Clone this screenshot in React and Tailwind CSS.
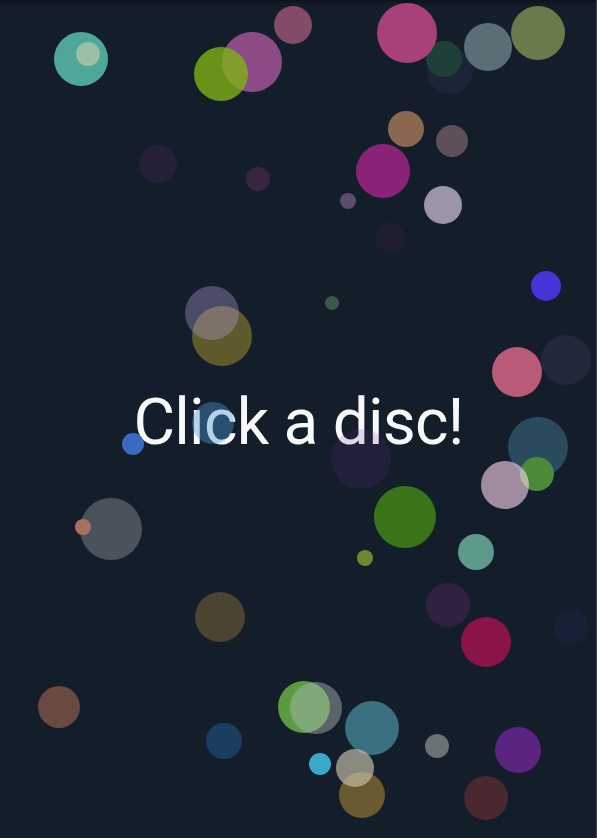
import React from "react";

const discs = [
  [81, 59, 27, "#4fa79a"],
  [88, 54, 12, "#9cc0a6"],
  [252, 62, 30, "#8b4b84"],
  [221, 74, 27, "rgba(130,181,19,0.78)"],
  [293, 25, 19, "#844b68"],
  [158, 164, 19, "#251f38"],
  [258, 179, 12, "#3a2540"],
  [450, 71, 23, "#1c2538"],
  [444, 59, 18, "#1e4038"],
  [407, 33, 30, "#a8407a"],
  [488, 47, 24, "#5a6e76"],
  [538, 33, 27, "#6b7a4a"],
  [406, 129, 18, "#8a6850"],
  [452, 141, 16, "#5e5058"],
  [383, 171, 27, "#8a2378"],
  [348, 201, 8, "#5a4d70"],
  [443, 205, 19, "#9c95a8"],
  [390, 237, 15, "#1f1e30"],
  [546, 286, 15, "#4535d8"],
  [222, 336, 30, "#5e5a2c"],
  [212, 313, 27, "rgba(184,164,234,0.33)"],
  [133, 444, 11, "#3a6ac0"],
  [213, 423, 21, "rgba(75,155,215,0.4)"],
  [111, 529, 31, "#4a535c"],
  [83, 527, 8, "#a87060"],
  [332, 303, 7, "#3a5a48"],
  [566, 360, 25, "#22283a"],
  [517, 372, 25, "#b85a78"],
  [361, 459, 30, "rgba(107,42,137,0.16)"],
  [538, 447, 30, "#2a4a5e"],
  [537, 474, 17, "#4a8a3a"],
  [505, 485, 24, "rgba(253,213,235,0.6)"],
  [405, 517, 31, "#3a7418"],
  [476, 552, 18, "#5e9a8c"],
  [365, 558, 8, "#6a8a30"],
  [220, 617, 25, "#4a4430"],
  [59, 707, 21, "#6a4a40"],
  [224, 741, 18, "#1a3d60"],
  [304, 707, 26, "#5a9a40"],
  [316, 708, 26, "rgba(175,185,183,0.45)"],
  [448, 605, 22, "#2e2240"],
  [486, 642, 25, "#8a1448"],
  [571, 627, 17, "#172035"],
  [372, 728, 27, "#3a7080"],
  [437, 746, 12, "#6a7272"],
  [518, 750, 23, "#5a2480"],
  [320, 764, 11, "#3aa8c8"],
  [362, 795, 23, "#6a5a30"],
  [355, 768, 19, "rgba(201,196,174,0.65)"],
  [486, 798, 22, "#4a2830"],
];

export default function App() {
  return (
    <div className="relative h-[838px] w-[597px] overflow-hidden bg-[#141e2b]">
      <div className="absolute inset-x-0 top-0 h-[6px] bg-gradient-to-b from-[#0d131c] to-transparent" />
      <div className="flex h-full w-full items-center justify-center pt-[8px]">
        <h1
          className="text-[64px] leading-none text-[#f8f8f8] tracking-[-0.75px]"
          style={{ fontFamily: "Roboto, 'Liberation Sans', sans-serif" }}
        >
          Click a disc!
        </h1>
      </div>
      {discs.map(([cx, cy, r, c], i) => (
        <div
          key={i}
          className="absolute rounded-full"
          style={{
            left: cx - r,
            top: cy - r,
            width: r * 2,
            height: r * 2,
            background: c,
          }}
        />
      ))}
      <div className="absolute right-0 top-0 h-full w-px bg-[#3e4654]" />
    </div>
  );
}
